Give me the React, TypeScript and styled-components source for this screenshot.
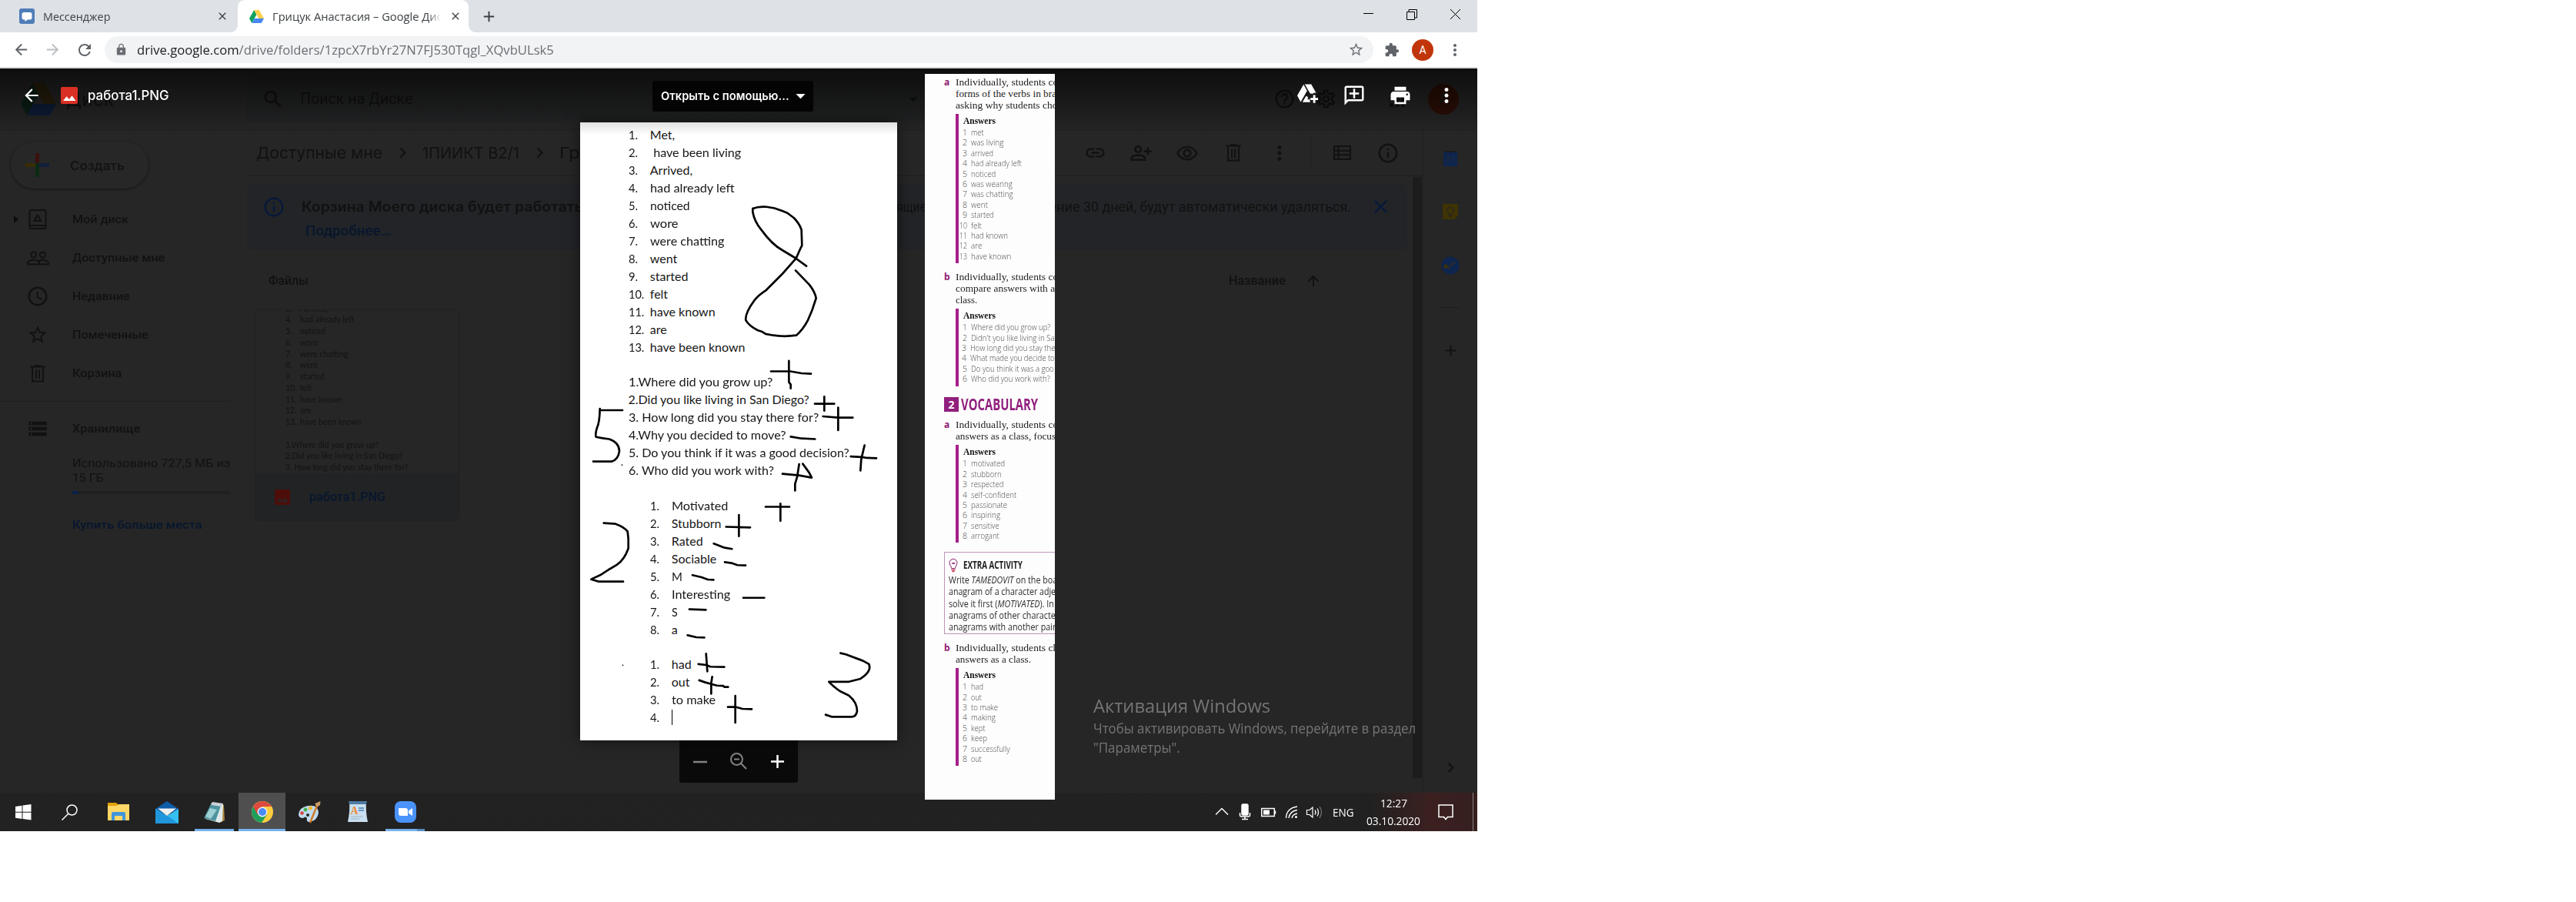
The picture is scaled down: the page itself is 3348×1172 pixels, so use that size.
import React, { useLayoutEffect, useRef, useState } from "react";
import styled, { createGlobalStyle, css } from "styled-components";
import {
  MdLink, MdOutlinePersonAddAlt, MdOutlineRemoveRedEye, MdMoreVert,
  MdInfoOutline, MdPrint, MdOutlineAddComment, MdPeopleOutline, MdAccessTime,
  MdStarBorder, MdHelpOutline, MdOutlineSettings, MdStorage, MdExtension, MdLock,
  MdArrowBack, MdArrowForward, MdRefresh, MdAdd, MdClose, MdSearch, MdArrowUpward,
  MdArrowDropDown, MdChevronRight, MdApps,
} from "react-icons/md";

const Global = createGlobalStyle`
  * { box-sizing: border-box; }
  body { margin: 0; background: #fff; font-family: Roboto, "Liberation Sans", sans-serif; }
  svg { display: block; flex: none; }
`;

/* ---------- text fitted to a measure ---------- */

const FitBox = styled.span<{ $w: number }>`
  display: inline-block;
  flex: none;
  width: ${(p) => p.$w}px;
  white-space: pre;
`;
const FitInner = styled.span`
  display: inline-block;
  transform-origin: 0 50%;
`;
function Fit({ w, children }: { w: number; children: React.ReactNode }) {
  const ref = useRef<HTMLSpanElement>(null);
  const [scale, setScale] = useState(1);
  useLayoutEffect(() => {
    if (ref.current) setScale(w / ref.current.offsetWidth);
  }, [w]);
  return (
    <FitBox $w={w}>
      <FitInner ref={ref} style={{ transform: `scaleX(${scale})` }}>{children}</FitInner>
    </FitBox>
  );
}

/* ---------- browser chrome ---------- */

const Screen = styled.div`
  position: relative;
  width: 1920px;
  height: 1080px;
  display: flex;
  flex-direction: column;
  overflow: hidden;
`;
const TabStrip = styled.div`
  height: 42px;
  background: #dee1e6;
  display: flex;
  font: 15px "Open Sans", "Noto Sans", sans-serif;
  color: #3c4043;
`;
const Tab = styled.div<{ $active?: boolean }>`
  position: relative;
  display: flex;
  align-items: center;
  width: ${(p) => (p.$active ? 300 : 309)}px;
  padding: 0 12px 0 ${(p) => (p.$active ? 15 : 25)}px;
  gap: 11px;
  ${(p) => p.$active && css`
    background: #fff;
    border-radius: 9px 9px 0 0;
    &::before, &::after {
      content: "";
      position: absolute;
      bottom: 0;
      width: 9px;
      height: 9px;
    }
    &::before { left: -9px; background: radial-gradient(circle at 0 0, transparent 8.5px, #fff 9px); }
    &::after { right: -9px; background: radial-gradient(circle at 100% 0, transparent 8.5px, #fff 9px); }
  `}
`;
const TabTitle = styled.div<{ $fade?: boolean }>`
  flex: 1;
  overflow: hidden;
  ${(p) => p.$fade && css`
    flex: none;
    width: 219px;
    mask-image: linear-gradient(90deg, #000 203px, transparent 219px);
  `}
`;
const NewTab = styled.div`
  display: flex;
  align-items: center;
  margin-left: 15px;
  color: #3c4043;
`;
const WindowButtons = styled.div`
  margin-left: auto;
  display: flex;
  padding: 12px 22px 0 0;
  gap: 43px;
`;
const Toolbar = styled.div`
  height: 47px;
  background: #fff;
  border-bottom: 2px solid #d6d6dc;
  display: flex;
  align-items: center;
  padding: 0 16px 0 16px;
  color: #5f6368;
`;
const NavIcons = styled.div`
  display: flex;
  width: 120px;
  gap: 18px;
`;
const AddressBar = styled.div`
  width: 1649px;
  height: 35px;
  border-radius: 18px;
  background: #f1f3f4;
  display: flex;
  align-items: center;
  padding: 0 12px 0 13px;
  font: 17px "Open Sans", "Noto Sans", sans-serif;
  gap: 12px;
  color: #6a6e73;
  b { font-weight: 400; color: #202124; }
  & > svg:last-child { margin-left: auto; }
`;
const Avatar = styled.div<{ $size: number; $bg: string; $fg: string }>`
  width: ${(p) => p.$size}px;
  height: ${(p) => p.$size}px;
  border-radius: 50%;
  background: ${(p) => p.$bg};
  color: ${(p) => p.$fg};
  font-size: ${(p) => p.$size / 2}px;
  display: flex;
  align-items: center;
  justify-content: center;
  flex: none;
`;
const ToolbarRight = styled.div`
  display: flex;
  align-items: center;
  margin-left: auto;
  gap: 16px;
  padding-right: 1px;
`;

/* ---------- dimmed drive page ---------- */

const Page = styled.div`
  position: relative;
  height: 941px;
  background: #262626;
  color: #111;
  overflow: hidden;
`;
const DriveHeader = styled.div`
  height: 80px;
  border-bottom: 1px solid #202020;
  display: flex;
  align-items: center;
  padding: 0 24px 0 27px;
`;
const DriveName = styled.div`
  width: 247px;
  padding-left: 13px;
  font: 25px Inter, Roboto, sans-serif;
`;
const SearchBox = styled.div`
  width: 898px;
  height: 58px;
  border-radius: 8px;
  background: #232425;
  display: flex;
  align-items: center;
  padding: 0 18px 0 20px;
  font-size: 19.5px;
  gap: 20px;
  & > svg:last-child { margin-left: auto; }
`;
const HeaderIcons = styled.div`
  margin-left: auto;
  display: flex;
  align-items: center;
  gap: 25px;
`;
const DriveBody = styled.div`
  display: flex;
  height: 861px;
`;
const Sidebar = styled.div`
  width: 320px;
  padding-top: 15px;
  font-size: 15px;
  font-weight: 500;
`;
const CreateButton = styled.div`
  margin: 0 0 15px 14px;
  width: 179px;
  height: 61px;
  border-radius: 31px;
  background: #272727;
  box-shadow: 0 1px 3px #141414;
  display: flex;
  align-items: center;
  padding-left: 19px;
  gap: 27px;
  font: 500 16px Inter, Roboto, sans-serif;
`;
const NavRow = styled.div`
  height: 50px;
  display: flex;
  align-items: center;
  padding-left: 18px;
`;
const Caret = styled.span<{ $on?: boolean }>`
  width: 6px;
  margin-right: 11px;
  border: 5.5px solid transparent;
  border-right: 0;
  border-left: 6px solid ${(p) => (p.$on ? "#0d0d0d" : "transparent")};
`;
const NavIcon = styled.span`
  width: 28px;
  margin-right: 31px;
  display: flex;
  justify-content: center;
`;
const Rule = styled.div`
  width: 300px;
  height: 1px;
  margin: 11px 0 10px;
  background: #1f1f1f;
`;
const StorageInfo = styled.div`
  margin-left: 94px;
  padding-top: 11px;
  font-size: 15px;
  font-weight: 400;
  line-height: 19px;
`;
const Meter = styled.div`
  width: 206px;
  height: 4px;
  margin: 7px 0 31px;
  background: linear-gradient(90deg, #0b2046 8px, #202021 8px);
`;
const BlueText = styled.div`
  color: #07162e;
  font-weight: 500;
`;
const Main = styled.div`
  width: 1530px;
  border-right: 1px solid #202020;
`;
const PathBar = styled.div`
  height: 60px;
  border-bottom: 1px solid #1e1e1e;
  display: flex;
  align-items: center;
  padding: 0 15px 0 13px;
  font: 20.5px Inter, Roboto, sans-serif;
`;
const PathSep = styled.span`
  width: 52px;
  display: flex;
  justify-content: center;
`;
const Actions = styled.div`
  margin-left: auto;
  display: flex;
  align-items: center;
`;
const Action = styled.span`
  width: 60px;
  display: flex;
  justify-content: center;
`;
const ActionDivider = styled.span`
  width: 1px;
  height: 41px;
  margin: 0 10px;
  background: #202020;
`;
const MainScroll = styled.div`
  display: flex;
  justify-content: space-between;
`;
const ScrollThumb = styled.div`
  width: 12px;
  height: 781px;
  margin: 1px 1px 0 0;
  background: #1c1c1c;
`;
const Banner = styled.div`
  margin: 10px 0 0 1px;
  width: 1508px;
  height: 86px;
  border-radius: 6px;
  background: #222427;
  padding: 15px 20px 0 20px;
  display: flex;
  gap: 21px;
  font-size: 18.5px;
  line-height: 30px;
`;
const BannerText = styled.div`
  flex: 1;
`;
const BannerLine = styled.div`
  display: flex;
  justify-content: space-between;
  padding-right: 3px;
  height: 29px;
`;
const MiddleWords = styled.span`
  margin-left: 274px;
`;
const Strong = styled.span`
  font: 600 18px/30px Inter, Roboto, sans-serif;
`;
const BannerLink = styled(BlueText)`
  padding-left: 5px;
  font-size: 18px;
  line-height: 34px;
`;
const ListHead = styled.div`
  height: 77px;
  display: flex;
  align-items: center;
  padding: 2px 111px 0 29px;
  font-size: 16px;
  font-weight: 500;
`;
const SortBy = styled.span`
  margin-left: auto;
  display: flex;
  align-items: center;
  gap: 25px;
`;
const FileCard = styled.div`
  margin-left: 11px;
  width: 266px;
  height: 275px;
  border: 1px solid #202122;
  border-radius: 5px;
  overflow: hidden;
  display: flex;
  flex-direction: column;
`;
const Thumb = styled.div`
  height: 212px;
  padding: 0 0 0 39px;
  overflow: hidden;
  font: 10.5px/14.77px Lato, sans-serif;
  color: #131313;
`;
const ThumbShift = styled.div`
  margin-top: -9.5px;
`;
const ThumbRow = styled.div`
  display: flex;
  height: 14.77px;
`;
const ThumbNo = styled.span`
  width: 19px;
`;
const CardFoot = styled.div`
  flex: 1;
  background: #212325;
  display: flex;
  align-items: center;
  padding: 0 0 0 25px;
  gap: 25px;
  font-size: 16px;
`;
const SideStrip = styled.div`
  flex: 1;
  display: flex;
  flex-direction: column;
  align-items: center;
  padding-top: 26px;
`;
const SideItem = styled.div<{ $h: number }>`
  height: ${(p) => p.$h}px;
`;

/* ---------- viewer over the page ---------- */

const Viewer = styled.div`
  position: absolute;
  inset: 0;
  z-index: 0;
  display: flex;
  flex-direction: column;
`;
const ViewerHeader = styled.div`
  position: relative;
  z-index: 2;
  height: 86px;
  margin-bottom: -16px;
  padding: 0 10px 17px 28px;
  background: linear-gradient(rgba(0, 0, 0, 0.64), rgba(0, 0, 0, 0.36) 45%, transparent);
  display: flex;
  align-items: center;
  color: #fff;
`;
const FileTitle = styled.div`
  width: 820px;
  display: flex;
  align-items: center;
  font: 500 17.5px Inter, Roboto, sans-serif;
  & > svg:first-child { margin-right: 25px; }
  & > span { margin-left: 13px; }
`;
const OpenWith = styled.div`
  width: 209px;
  height: 40px;
  margin-top: 2px;
  border-radius: 3px;
  background: #040404;
  display: flex;
  align-items: center;
  padding-left: 11px;
  font: 600 15px Inter, Roboto, sans-serif;
`;
const ViewerActions = styled.div`
  margin-left: auto;
  display: flex;
`;
const Flip = styled.span`
  transform: scaleX(-1);
`;
const Sheet = styled.div`
  position: relative;
  z-index: 1;
  flex: none;
  margin-left: 754px;
  width: 412px;
  height: 803px;
  padding: 5.3px 0 0 62.5px;
  background: #fff;
  box-shadow: 0 0 18px rgba(0, 0, 0, 0.55);
  color: #161616;
  font: 16px/22.94px Lato, sans-serif;
`;
const SheetRow = styled.div<{ $deep?: boolean }>`
  display: flex;
  height: 22.94px;
  padding-left: ${(p) => (p.$deep ? 28 : 0)}px;
`;
const SheetNo = styled.span`
  width: 28.3px;
`;
const TextCursor = styled.span`
  width: 1px;
  height: 20px;
  margin-top: 1px;
  background: #000;
`;
const Ink = styled.svg`
  position: absolute;
  inset: 0;
  fill: none;
  stroke: #000;
  stroke-linecap: round;
  stroke-linejoin: round;
  stroke-width: 2.7px;
  path { vector-effect: non-scaling-stroke; }
`;
const ZoomBar = styled.div`
  margin-left: 883px;
  width: 154px;
  height: 55px;
  border-radius: 0 0 3px 3px;
  background: #0a0a0a;
`;

/* ---------- answer key ---------- */

const Book = styled.div`
  position: absolute;
  z-index: 3;
  left: 1202px;
  top: 96px;
  width: 169px;
  height: 943px;
  padding: 4px 0 0 25px;
  background: #fdfdfd;
  overflow: hidden;
  white-space: nowrap;
`;
const Task = styled.div<{ $gap: number }>`
  display: flex;
  margin-top: ${(p) => p.$gap}px;
  font: 13.3px/14.8px "Liberation Serif", serif;
  color: #1e1e1e;
`;
const TaskMark = styled.span`
  flex: none;
  width: 15px;
  font: 700 12px/14.8px "Open Sans", sans-serif;
  color: #8f2070;
`;
const TaskLine = styled.div`
  height: 14.8px;
`;
const Answers = styled.div`
  margin: 3.5px 0 0 15px;
  border-left: 4px solid #a61f88;
  padding-bottom: 2px;
  color: #4c4c4c;
  font: 300 10.5px/13.4px "Open Sans", "Noto Sans", sans-serif;
`;
const AnswersTitle = styled.div`
  height: 18.2px;
  padding-left: 6px;
  font: 700 12px/18.6px "Liberation Serif", serif;
  color: #111;
`;
const AnswerRow = styled.div`
  display: flex;
  height: 13.4px;
`;
const AnswerNo = styled.span`
  width: 11px;
  margin-right: 5px;
  display: flex;
  justify-content: flex-end;
`;
const Heading = styled.div`
  display: flex;
  align-items: center;
  height: 19px;
  margin: 14.5px 0 -5px;
  gap: 3px;
  font: 700 20.8px/19px "Open Sans", sans-serif;
  color: #911f7d;
`;
const HeadingNo = styled.span`
  width: 19px;
  height: 19px;
  background: #911f7d;
  color: #fff;
  font-size: 14px;
  text-align: center;
`;
const ExtraBox = styled.div`
  height: 107.5px;
  width: 200px;
  margin-top: 11.5px;
  border: 1px solid #bd94b8;
  padding: 6px 0 0 5px;
  color: #2b2b2b;
  font: 12px/15.3px "Open Sans", sans-serif;
`;
const ExtraTitle = styled.div`
  display: flex;
  align-items: center;
  height: 21px;
  gap: 7px;
  margin-bottom: 1px;
  font: 700 13.5px "Open Sans", sans-serif;
  color: #1b1b1b;
`;
const ExtraLine = styled.div`
  height: 15.3px;
`;

/* ---------- watermark and taskbar ---------- */

const Watermark = styled.div`
  position: absolute;
  left: 1421px;
  top: 900px;
  color: #757575;
  font: 18px/25px "Open Sans", "Noto Sans", sans-serif;
`;
const WatermarkTitle = styled.div`
  font-size: 24px;
  line-height: 34px;
`;
const Taskbar = styled.div`
  height: 50px;
  display: flex;
  background: linear-gradient(90deg, #222 0, #212121 1780px, #3c2020 1860px, #351f1f 1920px);
`;
const TaskItem = styled.div<{ $w: number; $active?: boolean; $line?: string }>`
  width: ${(p) => p.$w}px;
  display: flex;
  align-items: center;
  justify-content: center;
  background: ${(p) => (p.$active ? "#4f4f4f" : "none")};
  border-bottom: 3px solid ${(p) => p.$line || "transparent"};
  padding-top: 3px;
`;
const ZoomItem = styled(TaskItem)`
  padding-left: 0;
  border-image: linear-gradient(90deg, #76b2ec 80%, #5a8cbd 80%) 1;
`;
const Spacer = styled.div<{ $w: number }>`
  width: ${(p) => p.$w}px;
`;
const Tray = styled.div`
  margin-left: auto;
  display: flex;
  align-items: center;
  color: #fff;
  font: 14.5px "Open Sans", "Noto Sans", sans-serif;
`;
const Clock = styled.div`
  width: 70px;
  margin: 0 23px 0 16px;
  display: flex;
  flex-direction: column;
  align-items: center;
  line-height: 23px;
`;
const DesktopPeek = styled.div`
  width: 1px;
  height: 50px;
  margin: 0 5px 0 25px;
  background: #8b8080;
`;

/* ---------- drawings ---------- */

const ImageBadge = ({ w, h, bg, fg }: { w: number; h: number; bg: string; fg: string }) => (
  <svg width={w} height={h} viewBox="0 0 22 22">
    <rect width="22" height="22" rx="2" fill={bg} />
    <path d="M3 18L7.6 12.2L10.8 16L14.5 11.2L19.5 18Z" fill={fg} />
  </svg>
);
const DriveLogo = ({ w, h, c }: { w: number; h: number; c: string[] }) => (
  <svg width={w} height={h} viewBox="0 0 46 42" preserveAspectRatio="none">
    <path d="M15 0L0 27L8 42L23 14Z" fill={c[0]} />
    <path d="M15 0H31L46 27H30Z" fill={c[1]} />
    <path d="M16 27H46L38 42H8Z" fill={c[2]} />
  </svg>
);
const TrashIcon = ({ w = 24 }: { w?: number }) => (
  <svg width={w} height={w * 1.15} viewBox="0 0 20 23" fill="none" stroke="currentColor" strokeWidth="2">
    <path d="M0 2.5H20M6 1.2H14M3 3V21.5H17V3M8 6.5V18M12 6.5V18" />
  </svg>
);
const AddToDriveIcon = () => (
  <svg width="28" height="25" viewBox="0 0 28 25" fill="#fff">
    <path d="M8.200.800L0 15.200L4.500 23.500L12.800 9Z" />
    <path d="M9.800.500H18.200L24.500 11.700Q22 11.300 20 12.700L16.800 12.500Z" />
    <path d="M11.500 15.800L6.800 23.800H17Q16 21.500 16.500 19.500L13.500 20.500L14 17Z" />
    <path d="M20.700 14.500h2.800v3.700H27V21h-3.500v3.700h-2.800V21h-3.500v-2.800h3.500z" />
  </svg>
);
const TableIcon = () => (
  <svg width="23" height="19" viewBox="0 0 23 19" fill="none" stroke="currentColor" strokeWidth="2">
    <path d="M1 1H22V18H1ZM1 6.700H22M1 12.300H22M6.500 1V18" />
  </svg>
);

type Row = [string, number];

const firstList: Row[] = [
  ["Met,", 32], [" have been living", 118], ["Arrived,", 55], ["had already left", 110], ["noticed", 52],
  ["wore", 36], ["were chatting", 97], ["went", 35], ["started", 50], ["felt", 23], ["have known", 85],
  ["are", 22], ["have been known", 124],
];
const questions: Row[] = [
  ["1.Where did you grow up?", 187], ["2.Did you like living in San Diego?", 235],
  ["3. How long did you stay there for?", 247], ["4.Why you decided to move?", 205],
  ["5. Do you think if it was a good decision?", 287], ["6. Who did you work with?", 189],
];
const adjectives: Row[] = [
  ["Motivated", 73], ["Stubborn", 65], ["Rated", 41], ["Sociable", 58], ["M", 14], ["Interesting", 76], ["S", 8], ["a", 8],
];
const verbs: Row[] = [["had", 26], ["out", 24], ["to make", 57]];
const thumbScale = 0.646;

const keyA: Row[] = [
  ["met", 17], ["was living", 42], ["arrived", 29], ["had already left", 66], ["noticed", 32], ["was wearing", 54],
  ["was chatting", 55], ["went", 22], ["started", 30], ["felt", 14], ["had known", 48], ["are", 14], ["have known", 52],
];
const keyB: Row[] = [
  ["Where did you grow up?", 103], ["Didn't you like living in Sa", 109], ["How long did you stay the", 110],
  ["What made you decide to", 110], ["Do you think it was a goo", 108], ["Who did you work with?", 103],
];
const keyC: Row[] = [
  ["motivated", 44], ["stubborn", 40], ["respected", 42], ["self-confident", 59], ["passionate", 47],
  ["inspiring", 38], ["sensitive", 37], ["arrogant", 37],
];
const keyD: Row[] = [
  ["had", 16], ["out", 14], ["to make", 35], ["making", 32], ["kept", 19], ["keep", 21], ["successfully", 51], ["out", 14],
];

const AnswerKey = ({ rows }: { rows: Row[] }) => (
  <Answers>
    <AnswersTitle><Fit w={42}>Answers</Fit></AnswersTitle>
    {rows.map(([t, w], i) => (
      <AnswerRow key={i}>
        <AnswerNo>{i > 8 ? <Fit w={10}>{i + 1}</Fit> : i + 1}</AnswerNo>
        <Fit w={w}>{t}</Fit>
      </AnswerRow>
    ))}
  </Answers>
);
const Instruction = ({ mark, gap, lines }: { mark: string; gap: number; lines: Row[] }) => (
  <Task $gap={gap}>
    <TaskMark>{mark}</TaskMark>
    <div>{lines.map(([t, w]) => <TaskLine key={t}><Fit w={w}>{t}</Fit></TaskLine>)}</div>
  </Task>
);
const NumberedRows = ({ rows, deep }: { rows: Row[]; deep?: boolean }) => (
  <>
    {rows.map(([t, w], i) => (
      <SheetRow key={i} $deep={deep}>
        <SheetNo><Fit w={i > 8 ? 20 : 12}>{`${i + 1}.`}</Fit></SheetNo>
        <Fit w={w}>{t}</Fit>
      </SheetRow>
    ))}
  </>
);

const Handwriting = () => (
  <Ink width="412" height="803" viewBox="754 159 412 803">
    <g transform="translate(740 0) scale(0.33333 0.35714)">
      <path d="M715 759C745 747 790 751 830 767L850 775L876 793Q898 815 905 836L907 893L898 910L884 940L830 997L768 1055Q735 1075 722 1092Q684 1140 688 1165Q700 1185 735 1202L752 1207L765 1215L795 1220Q840 1226 885 1220Q910 1200 930 1165L946 1130L962 1085Q958 1062 935 1035L882 984" />
      <path d="M715 759V772Q722 805 745 832Q790 890 830 910L880 938L924 968" />
      <path d="M786 1351H862L905 1358L942 1360M856 1313V1390L863 1399V1413" />
    </g>
    <g transform="translate(740 440) scale(0.33333 0.38265)">
      <path d="M957 221H1033M994 197V245M989 264L1048 268L1105 268M1048 234V311" />
      <path d="M207 243H119M119 238Q118 285 108 302Q100 325 104 334Q130 339 155 341Q194 352 195 382Q190 412 165 417H93" />
      <path d="M863 333L905 339L958 341M1097 400L1140 402L1160 405L1197 406M1151 362L1138 410L1135 448" />
      <path d="M831 459L895 464L945 472L935 455L910 425M896 426L888 470L880 493V516" />
      <path d="M765 571H858M823 560V619M611 639L705 641M661 599V671" />
      <path d="M134 626L180 629Q215 640 227 655L230 680V712Q215 750 185 768L158 782L120 803L85 817L115 825H210" />
      <path d="M563 696L605 710L634 714M606 759L632 762L655 769L687 770M480 803L515 810L540 818L562 819M678 880H760M468 919L532 921M461 1007L495 1014L526 1015" />
      <path d="M503 1105L533 1108L550 1114L604 1115M533 1070L538 1130M506 1160Q530 1168 550 1172L575 1178L600 1179L605 1183L619 1183M557 1148L553 1170V1206M618 1251L650 1251L675 1257L711 1258M647 1213V1304" />
      <path d="M1057 1068L1078 1072L1145 1094L1168 1105Q1180 1130 1135 1155L1090 1165H1012Q1025 1178 1055 1197L1090 1212Q1122 1235 1122 1265Q1118 1284 1102 1284H1022L999 1277" />
      <path strokeWidth="1.6" d="M205 429h.5M208 1109h.5" />
    </g>
  </Ink>
);

export default function App() {
  return (
    <Screen>
      <Global />
      <TabStrip>
        <Tab>
          <svg width="20" height="20" viewBox="0 0 20 20">
            <rect width="20" height="20" rx="3" fill="#4f7db8" />
            <path d="M6 5h8q2.500 0 2.500 2.500V12q0 2.500-2.500 2.500h-3L7.500 17v-2.500H6Q3.500 14.500 3.500 12V7.500Q3.500 5 6 5" fill="#fff" />
          </svg>
          <TabTitle><Fit w={87}>Мессенджер</Fit></TabTitle>
          <MdClose size={16} />
        </Tab>
        <Tab $active>
          <DriveLogo w={19} h={17} c={["#11a15e", "#ffcf48", "#4688f4"]} />
          <TabTitle $fade><Fit w={228}>Грицук Анастасия – Google Диск</Fit></TabTitle>
          <MdClose size={16} />
        </Tab>
        <NewTab><MdAdd size={23} /></NewTab>
        <WindowButtons>
          <svg width="13" height="14" stroke="#000"><path d="M0 5.500H13" /></svg>
          <svg width="14" height="14" stroke="#000" fill="none"><path d="M.5 3.500H10.500V13.500H.5ZM3 3.500V.5H13.500V11H10.500" /></svg>
          <svg width="13" height="13" stroke="#000"><path d="M0 0L13 13M13 0L0 13" /></svg>
        </WindowButtons>
      </TabStrip>
      <Toolbar>
        <NavIcons>
          <MdArrowBack size={23} />
          <MdArrowForward size={23} color="#bcbfc3" />
          <MdRefresh size={24} />
        </NavIcons>
        <AddressBar>
          <MdLock size={17} />
          <Fit w={542}><b>drive.google.com</b>/drive/folders/1zpcX7rbYr27N7FJ530Tqgl_XQvbULsk5</Fit>
          <MdStarBorder size={21} />
        </AddressBar>
        <ToolbarRight>
          <MdExtension size={20} />
          <Avatar $size={28} $bg="#c1350b" $fg="#fff">A</Avatar>
          <MdMoreVert size={24} />
        </ToolbarRight>
      </Toolbar>

      <Page>
        <DriveHeader>
          <DriveLogo w={46} h={42} c={["#0a2015", "#28200a", "#0e1c38"]} />
          <DriveName><Fit w={62}>Диск</Fit></DriveName>
          <SearchBox>
            <MdSearch size={30} />
            <Fit w={146}>Поиск на Диске</Fit>
            <MdArrowDropDown size={26} />
          </SearchBox>
          <HeaderIcons>
            <MdHelpOutline size={29} />
            <MdOutlineSettings size={29} />
            <Spacer $w={13} />
            <MdApps size={30} />
            <Avatar $size={40} $bg="#2d0e06" $fg="#181818">A</Avatar>
          </HeaderIcons>
        </DriveHeader>
        <DriveBody>
          <Sidebar>
            <CreateButton>
              <svg width="31" height="31" viewBox="0 0 31 31">
                <path d="M13 0h5v13h-5z" fill="#3a100d" /><path d="M0 13h13v5H0z" fill="#3a2d05" />
                <path d="M13 13h5v18h-5z" fill="#0c2a14" /><path d="M18 13h13v5H18z" fill="#10203c" />
              </svg>
              <Fit w={71}>Создать</Fit>
            </CreateButton>
            <NavRow>
              <Caret $on />
              <NavIcon>
                <svg width="24" height="26" viewBox="0 0 24 26" fill="none" stroke="#111" strokeWidth="2">
                  <rect x="1.500" y="1" width="21" height="24" rx="2" /><path d="M2 21h20" />
                  <path d="M12 7L7.500 15H16L12 7L16 15" />
                </svg>
              </NavIcon>
              <Fit w={73}>Мой диск</Fit>
            </NavRow>
            <NavRow><Caret /><NavIcon><MdPeopleOutline size={31} /></NavIcon><Fit w={120}>Доступные мне</Fit></NavRow>
            <NavRow><Caret /><NavIcon><MdAccessTime size={30} /></NavIcon><Fit w={75}>Недавние</Fit></NavRow>
            <NavRow><Caret /><NavIcon><MdStarBorder size={28} /></NavIcon><Fit w={99}>Помеченные</Fit></NavRow>
            <NavRow><Caret /><NavIcon><TrashIcon w={20} /></NavIcon><Fit w={64}>Корзина</Fit></NavRow>
            <Rule />
            <NavRow><Caret /><NavIcon><MdStorage size={28} /></NavIcon><Fit w={88}>Хранилище</Fit></NavRow>
            <StorageInfo>
              <div><Fit w={205}>Использовано 727,5 МБ из</Fit></div>
              <div><Fit w={40}>15 ГБ</Fit></div>
              <Meter />
              <BlueText><Fit w={169}>Купить больше места</Fit></BlueText>
            </StorageInfo>
          </Sidebar>
          <Main>
            <PathBar>
              <Fit w={164}>Доступные мне</Fit>
              <PathSep><MdChevronRight size={27} /></PathSep>
              <Fit w={126}>1ПИИКТ B2/1</Fit>
              <PathSep><MdChevronRight size={27} /></PathSep>
              <Fit w={80}>Грицук</Fit>
              <Actions>
                <Action><MdLink size={29} /></Action>
                <Action><MdOutlinePersonAddAlt size={30} /></Action>
                <Action><MdOutlineRemoveRedEye size={30} /></Action>
                <Action><TrashIcon w={20} /></Action>
                <Action><MdMoreVert size={30} /></Action>
                <ActionDivider />
                <Action><TableIcon /></Action>
                <Action><MdInfoOutline size={30} /></Action>
              </Actions>
            </PathBar>
            <MainScroll>
              <div>
                <Banner>
                  <MdInfoOutline size={30} color="#07193a" />
                  <BannerText>
                    <BannerLine>
                      <Strong><Fit w={366}>Корзина Моего диска будет работать</Fit></Strong>
                      <MiddleWords><Fit w={56}>ящиеся</Fit></MiddleWords>
                      <Fit w={402}>чение 30 дней, будут автоматически удаляться.</Fit>
                    </BannerLine>
                    <BannerLink><Fit w={111}>Подробнее…</Fit></BannerLink>
                  </BannerText>
                  <MdClose size={29} color="#07193a" />
                </Banner>
                <ListHead>
                  <Fit w={52}>Файлы</Fit>
                  <SortBy><Fit w={74}>Название</Fit><MdArrowUpward size={22} /></SortBy>
                </ListHead>
                <FileCard>
                  <Thumb>
                    <ThumbShift>
                      {firstList.slice(2).map(([t, w], i) => (
                        <ThumbRow key={t}>
                          <ThumbNo>{i + 3}.</ThumbNo>
                          <Fit w={w * thumbScale}>{t}</Fit>
                        </ThumbRow>
                      ))}
                      <ThumbRow />
                      {questions.slice(0, 3).map(([t, w]) => (
                        <ThumbRow key={t}><Fit w={w * thumbScale}>{t}</Fit></ThumbRow>
                      ))}
                    </ThumbShift>
                  </Thumb>
                  <CardFoot>
                    <ImageBadge w={20} h={20} bg="#4d0e0a" fg="#2e2222" />
                    <BlueText><Fit w={99}>работа1.PNG</Fit></BlueText>
                  </CardFoot>
                </FileCard>
              </div>
              <ScrollThumb />
            </MainScroll>
          </Main>
          <SideStrip>
            <SideItem $h={70}>
              <svg width="20" height="22"><path d="M1 3h18v18H1z" fill="#0e254e" /><path d="M2 1h16v2H2z" fill="#1c1c1e" />
                <text x="10" y="16" fontSize="11" textAnchor="middle" fill="#262b33" fontFamily="Roboto, sans-serif">31</text></svg>
            </SideItem>
            <SideItem $h={68}>
              <svg width="20" height="21" viewBox="0 0 20 21"><path d="M0 0h20v15l-5 5H0z" fill="#3f3304" />
                <path d="M8 14h4v-2q2-1 2-3.500a4 4 0 0 0-8 0Q6 11 8 12zM8 16h4" fill="none" stroke="#2a2720" strokeWidth="1.300" /></svg>
            </SideItem>
            <SideItem $h={66}>
              <svg width="24" height="24"><circle cx="12" cy="12" r="11.500" fill="#0e254e" /><circle cx="6" cy="13" r="2.500" fill="#3f3304" />
                <path d="M8 16L18 7" stroke="#262a31" strokeWidth="3" /></svg>
            </SideItem>
            <SideItem $h={45}><svg width="25" height="2"><path d="M0 .5H25" stroke="#1e1e1e" /></svg></SideItem>
            <SideItem $h={541}><MdAdd size={23} /></SideItem>
            <MdChevronRight size={25} />
          </SideStrip>
        </DriveBody>

        <Viewer>
          <ViewerHeader>
            <FileTitle>
              <MdArrowBack size={26} />
              <ImageBadge w={22} h={22} bg="#d93025" fg="#fff" />
              <span><Fit w={106}>работа1.PNG</Fit></span>
            </FileTitle>
            <OpenWith><Fit w={167}>Открыть с помощью...</Fit><MdArrowDropDown size={29} /></OpenWith>
            <ViewerActions>
              <Action><AddToDriveIcon /></Action>
              <Action><Flip><MdOutlineAddComment size={30} /></Flip></Action>
              <Action><MdPrint size={30} /></Action>
              <Action><MdMoreVert size={30} /></Action>
            </ViewerActions>
          </ViewerHeader>
          <Sheet>
            <NumberedRows rows={firstList} />
            <SheetRow />
            {questions.map(([t, w]) => <SheetRow key={t}><Fit w={w}>{t}</Fit></SheetRow>)}
            <SheetRow />
            <NumberedRows rows={adjectives} deep />
            <SheetRow />
            <NumberedRows rows={verbs} deep />
            <SheetRow $deep><SheetNo><Fit w={12}>4.</Fit></SheetNo><TextCursor /></SheetRow>
            <Handwriting />
          </Sheet>
          <ZoomBar>
            <svg width="154" height="55" fill="none" strokeWidth="2.500">
              <path d="M18 28H36" stroke="#848484" />
              <circle cx="74.500" cy="24.500" r="7.500" stroke="#848484" strokeWidth="2" />
              <path d="M71 24.500h7M80 30L87 37" stroke="#848484" strokeWidth="2" />
              <path d="M119 27.500H136M127.500 19V36" stroke="#fff" />
            </svg>
          </ZoomBar>
        </Viewer>
      </Page>

      <Taskbar>
        <TaskItem $w={60}>
          <svg width="21" height="21" fill="#fff"><path d="M0 3L8.500 1.800V9.700H0ZM9.500 1.600L20.500 0V9.700H9.500ZM0 10.700H8.500V19L0 17.800ZM9.500 10.700H20.500V20.500L9.500 19.100Z" /></svg>
        </TaskItem>
        <TaskItem $w={60}>
          <svg width="21" height="21" fill="none" stroke="#fff" strokeWidth="1.500"><circle cx="13.500" cy="7.500" r="6.500" /><path d="M9 12L.5 20.500" /></svg>
        </TaskItem>
        <TaskItem $w={68}>
          <svg width="28" height="24"><path d="M0 0h11l2 2v5H0z" fill="#e3a200" /><path d="M0 4h11l3-2h14v21H0z" fill="#ffd766" />
            <path d="M5 23v-9q0-2 2-2h14q2 0 2 2v9h-4v-6H9v6z" fill="#3f96dc" /></svg>
        </TaskItem>
        <TaskItem $w={57}>
          <svg width="30" height="29"><path d="M0 10L15 0L30 10V14H0Z" fill="#0f5da8" />
            <path d="M0 10V29H30V10L15 19Z" fill="#36c0f2" /><path d="M0 10V29H30L15 18.500Z" fill="#2196dd" /><path d="M3 9.500H27L15 19Z" fill="#eef0f2" /></svg>
        </TaskItem>
        <Spacer $w={8} />
        <TaskItem $w={51} $line="#76b2ec">
          <svg width="28" height="27"><path d="M12 2L26 4L27 24L20 27Z" fill="#a8873e" /><path d="M10 1L25 3L24 25L20 27L2 22Z" fill="#dfe9ea" />
            <path d="M9 3L22 5L15 25L0 21Z" fill="#4f939f" /><path d="M11 0L25 2L23 6L10 4Z" fill="#c9d3d6" /><path d="M8 8L17 10L9 22L2 19Z" fill="#9dd0d4" /></svg>
        </TaskItem>
        <Spacer $w={6} />
        <TaskItem $w={61} $active $line="#76b2ec">
          <svg width="28" height="28" viewBox="0 0 28 28">
            <circle cx="14" cy="14" r="14" fill="#fbcd3e" />
            <path d="M14 14L1.900 7A14 14 0 0 0 13 28L20 17.500Z" fill="#1d9f5b" />
            <path d="M14 7H26.100A14 14 0 0 0 1.900 7L8 17.500Z" fill="#dc4b3e" />
            <circle cx="14" cy="14" r="6.400" fill="#f3f3f3" /><circle cx="14" cy="14" r="5" fill="#4a8af4" />
          </svg>
        </TaskItem>
        <TaskItem $w={61}>
          <svg width="30" height="29"><path d="M13 6Q26 4 27 14Q26 26 14 27Q11 26 12 22Q10 19 7 22Q1 22 1 17Q2 8 13 6Z" fill="#bfdcf0" />
            <circle cx="5.500" cy="15.500" r="2.300" fill="#d9433c" /><circle cx="10" cy="11" r="2.500" fill="#4bb04f" /><circle cx="16.500" cy="9" r="2.500" fill="#f0b52b" /><circle cx="13" cy="18" r="2" fill="#262626" />
            <path d="M25 6L16 28" stroke="#d27b26" strokeWidth="2.500" /><path d="M22.500 3L29.500 0L29 5L26 7L23.500 6Z" fill="#c89a64" /></svg>
        </TaskItem>
        <Spacer $w={3} />
        <TaskItem $w={60}>
          <svg width="26" height="28"><path d="M2 0H24Q23 14 26 27H0Q3 14 2 0Z" fill="#c9dff0" /><path d="M1 0H25L24 4H2Z" fill="#4d7aa3" />
            <path d="M14 9h7M14 12h7" stroke="#4a7fb5" strokeWidth="1.500" /><path d="M4 20h15M4 23h11" stroke="#9db4c6" />
            <text x="3.500" y="17" fontSize="14" fontWeight="700" fill="#f08c3a" fontFamily="Liberation Serif, serif">A</text></svg>
        </TaskItem>
        <Spacer $w={6} />
        <ZoomItem $w={51} $line="#76b2ec">
          <svg width="28" height="28"><rect width="28" height="28" rx="8" fill="#4a93fb" /><path d="M5 9h9q3 0 3 3v7H8q-3 0-3-3zM18 12.500l5-3.500v10l-5-3.500z" fill="#fff" /></svg>
        </ZoomItem>
        <Tray>
          <svg width="152" height="50" fill="none" stroke="#fff" strokeWidth="1.500">
            <path d="M0 28.500L8 20.500L16 28.500" />
            <rect x="34" y="15" width="8" height="14" rx="1.500" fill="#fff" /><path d="M31.500 26v3q0 2 2 2h9q2 0 2-2v-3M38 31v4M34 34.500h8" />
            <path d="M59.800 20.500h16.500v10H59.800zM77.500 23.500v4" /><path d="M62 22.500h8v6h-8z" fill="#fff" stroke="none" />
            <path d="M91.500 33Q92 20 106 18M95 33Q96 24 106 22.500M99 33Q100 28 106 27" strokeWidth="1.300" /><circle cx="104.500" cy="31.500" r="1.500" fill="#fff" stroke="none" />
            <path d="M118.500 22.500h3.500l4-3.500v13l-4-3.500h-3.500zM129 22.500q2 3 0 6M132 20.500q3 5 0 10" strokeWidth="1.200" /><path d="M135 18q5 7 0 15" strokeWidth="1.200" stroke="#777" />
          </svg>
          <Fit w={28}>ENG</Fit>
          <Clock><Fit w={35}>12:27</Fit><Fit w={70}>03.10.2020</Fit></Clock>
          <svg width="20" height="21" fill="none" stroke="#fff" strokeWidth="1.500"><path d="M1 1H19V16.500H12.500L10 19.500L7.500 16.500H1Z" /></svg>
          <DesktopPeek />
        </Tray>
      </Taskbar>

      <Watermark>
        <WatermarkTitle><Fit w={230}>Активация Windows</Fit></WatermarkTitle>
        <div><Fit w={419}>Чтобы активировать Windows, перейдите в раздел</Fit></div>
        <div><Fit w={113}>"Параметры".</Fit></div>
      </Watermark>

      <Book>
        <Instruction mark="a" gap={0} lines={[["Individually, students co", 133], ["forms of the verbs in bra", 131], ["asking why students cho", 132]]} />
        <AnswerKey rows={keyA} />
        <Instruction mark="b" gap={11} lines={[["Individually, students co", 133], ["compare answers with a", 129], ["class.", 28]]} />
        <AnswerKey rows={keyB} />
        <Heading><HeadingNo>2</HeadingNo><Fit w={100}>VOCABULARY</Fit></Heading>
        <Instruction mark="a" gap={15} lines={[["Individually, students co", 133], ["answers as a class, focus", 130]]} />
        <AnswerKey rows={keyC} />
        <ExtraBox>
          <ExtraTitle>
            <svg width="12" height="19" fill="none" stroke="#8f2070"><path d="M3.500 13.500Q3.500 11 1.800 9A5 5 0 1 1 10.200 9Q8.500 11 8.500 13.500ZM4 6l1.500 2L6 6l.8 2L8 6" /><path d="M3.500 15.500h5M4.500 17.500h3" strokeWidth="1.500" stroke="#c2304f" /></svg>
            <Fit w={77}>EXTRA ACTIVITY</Fit>
          </ExtraTitle>
          <ExtraLine><Fit w={141}>Write <i>TAMEDOVIT</i> on the boa</Fit></ExtraLine>
          <ExtraLine><Fit w={139}>anagram of a character adje</Fit></ExtraLine>
          <ExtraLine><Fit w={137}>solve it first (<i>MOTIVATED</i>). In</Fit></ExtraLine>
          <ExtraLine><Fit w={139}>anagrams of other characte</Fit></ExtraLine>
          <ExtraLine><Fit w={139}>anagrams with another pair</Fit></ExtraLine>
        </ExtraBox>
        <Instruction mark="b" gap={10.5} lines={[["Individually, students ch", 133], ["answers as a class.", 98]]} />
        <AnswerKey rows={keyD} />
      </Book>
    </Screen>
  );
}
